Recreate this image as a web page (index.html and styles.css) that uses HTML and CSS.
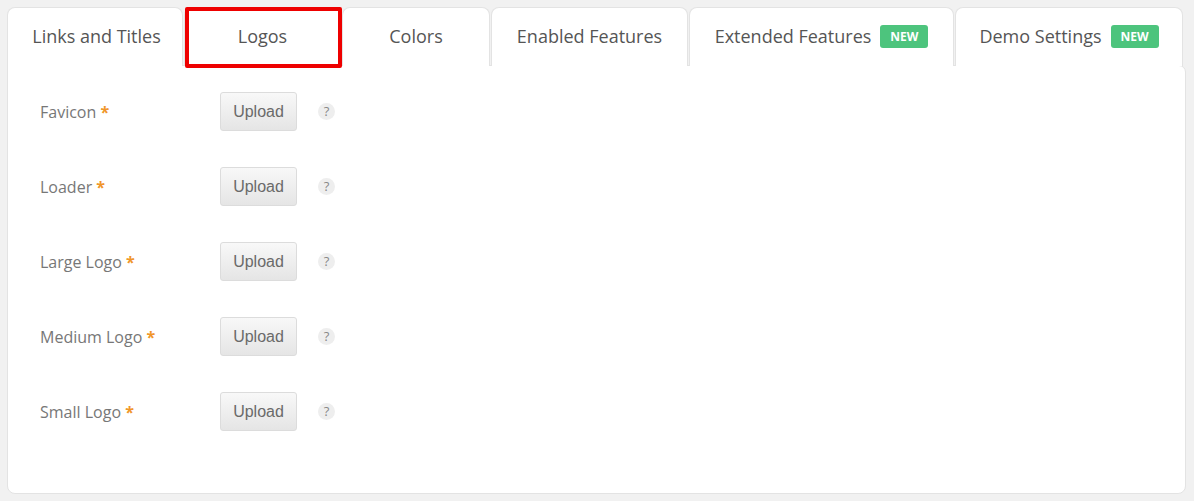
FILE: index.html
```html
<!DOCTYPE html>
<html>
<head>
<meta charset="utf-8">
<link rel="stylesheet" href="styles.css">
</head>
<body>
<div class="wrap">
  <div class="tabs">
    <div class="tab tab-links">Links and Titles</div>
    <div class="tab tab-logos active">Logos</div>
    <div class="tab tab-colors">Colors</div>
    <div class="tab tab-enabled">Enabled Features</div>
    <div class="tab tab-extended">Extended Features <span class="badge">NEW</span></div>
    <div class="tab tab-demo">Demo Settings <span class="badge">NEW</span></div>
  </div>
  <div class="panel">
    <div class="row">
      <div class="label">Favicon <span class="req">*</span></div>
      <button class="upload">Upload</button>
      <span class="help">?</span>
    </div>
    <div class="row">
      <div class="label">Loader <span class="req">*</span></div>
      <button class="upload">Upload</button>
      <span class="help">?</span>
    </div>
    <div class="row">
      <div class="label">Large Logo <span class="req">*</span></div>
      <button class="upload">Upload</button>
      <span class="help">?</span>
    </div>
    <div class="row">
      <div class="label">Medium Logo <span class="req">*</span></div>
      <button class="upload">Upload</button>
      <span class="help">?</span>
    </div>
    <div class="row">
      <div class="label">Small Logo <span class="req">*</span></div>
      <button class="upload">Upload</button>
      <span class="help">?</span>
    </div>
  </div>
</div>
</body>
</html>
```

FILE: styles.css
```css
html, body {
  margin: 0;
  padding: 0;
  background: #f1f1f1;
}
body {
  font-family: "Open Sans", "Liberation Sans", sans-serif;
}
.wrap {
  padding: 7px 0 0 7px;
  width: 1179px;
}
.tabs {
  display: flex;
  gap: 1px;
  height: 58px;
  position: relative;
  z-index: 1;
}
.tab {
  box-sizing: border-box;
  height: 59px;
  flex: none;
  display: flex;
  align-items: center;
  justify-content: center;
  background: #fff;
  border: 1px solid #e3e3e3;
  border-bottom: none;
  border-radius: 8px 8px 0 0;
  font-size: 18px;
  color: #555;
  padding-bottom: 2px;
}
.tab-links { width: 176px; padding-left: 3px; }
.tab-logos { width: 157px; }
.tab-colors { width: 148px; }
.tab-enabled { width: 197px; }
.tab-extended { width: 265px; }
.tab-demo { width: 228px; }
.tab.active {
  position: relative;
}
.tab.active::after {
  content: "";
  position: absolute;
  left: 0px;
  top: -1px;
  width: 149px;
  height: 53px;
  border: 4px solid #ee0000;
  border-radius: 2px;
}
.badge {
  display: inline-block;
  margin-left: 9px;
  background: #4dc47d;
  color: #fff;
  font-family: "Open Sans", sans-serif;
  font-weight: 700;
  font-size: 12px;
  line-height: 23px;
  height: 23px;
  width: 48px;
  text-align: center;
  border-radius: 3px;
}
.panel {
  box-sizing: border-box;
  background: #fff;
  border: 1px solid #e3e3e3;
  border-radius: 0 7px 8px 8px;
  height: 429px;
  padding: 26px 0 0 32px;
  display: flex;
  flex-direction: column;
  gap: 36px;
}
.row {
  display: flex;
  align-items: center;
  height: 39px;
}
.label {
  width: 180px;
  font-size: 16px;
  color: #777;
  padding-top: 1px;
}
.req {
  color: #f0962a;
  font-weight: 700;
}
.upload {
  box-sizing: border-box;
  width: 77px;
  height: 39px;
  border: 1px solid #dcdcdc;
  border-radius: 3px;
  background: linear-gradient(#f8f8f8, #e5e5e5);
  font-family: "Liberation Sans", Arial, sans-serif;
  font-size: 16px;
  color: #6a6a6a;
  padding: 0;
  margin: 0;
}
.help {
  margin-left: 21px;
  width: 17px;
  height: 17px;
  border-radius: 50%;
  background: #eeeeee;
  color: #888;
  font-size: 13px;
  line-height: 17px;
  text-align: center;
  font-family: "Open Sans", sans-serif;
}
```
